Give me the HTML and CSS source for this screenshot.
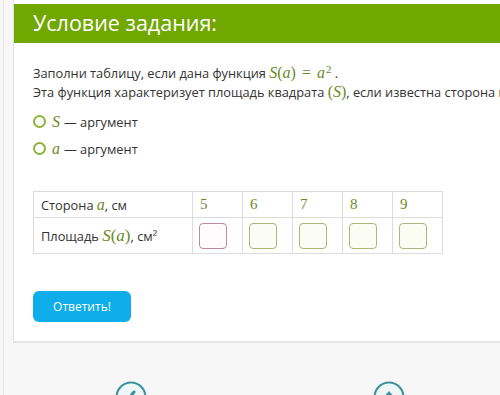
FILE: index.html
```html
<!DOCTYPE html>
<html lang="ru">
<head>
    <meta charset="UTF-8">
    <title>Условие задания</title>
    <link rel="stylesheet" href="styles.css">
</head>
<body>
    <div class="page">
        <div class="card">
            <header class="task-header">Условие задания:</header>

            <main class="task-body">
                <p class="task-text">Заполни таблицу, если дана функция <span class="math">S</span><span class="math-up">(</span><span class="math">a</span><span class="math-up">)</span><span class="math-up eq">=</span><span class="math">a</span><sup class="math-up">2</sup> .</p>
                <p class="task-text">Эта функция характеризует площадь квадрата <span class="math-up">(</span><span class="math">S</span><span class="math-up">)</span>, если известна сторона квадрата <span class="math-up">(</span><span class="math">a</span><span class="math-up">)</span>.</p>

                <div class="options">
                    <label class="option"><span class="radio"></span><span class="math">S</span> — аргумент</label>
                    <label class="option"><span class="radio"></span><span class="math">a</span> — аргумент</label>
                </div>

                <table class="answer-table">
                    <tr class="row-head">
                        <td class="label-cell">Сторона <span class="math">a</span>, см</td>
                        <td class="num">5</td>
                        <td class="num">6</td>
                        <td class="num">7</td>
                        <td class="num">8</td>
                        <td class="num">9</td>
                    </tr>
                    <tr class="row-input">
                        <td class="label-cell">Площадь <span class="math big">S</span><span class="math-up big">(</span><span class="math big">a</span><span class="math-up big">)</span>, см²</td>
                        <td><span class="box active"></span></td>
                        <td><span class="box"></span></td>
                        <td><span class="box"></span></td>
                        <td><span class="box"></span></td>
                        <td><span class="box"></span></td>
                    </tr>
                </table>

                <button class="answer-btn">Ответить!</button>
            </main>
        </div>

        <footer class="nav">
            <span class="nav-icon">
                <svg width="32" height="32" viewBox="0 0 32 32"><circle cx="16" cy="16" r="14.5" fill="#eef7f8" stroke="#3f8f9c" stroke-width="2"/><path d="M11 21 L19 11" stroke="#3f8f9c" stroke-width="3" stroke-linecap="round"/></svg>
            </span>
            <span class="nav-icon">
                <svg width="32" height="32" viewBox="0 0 32 32"><circle cx="16" cy="16" r="14.5" fill="#eef7f8" stroke="#3f8f9c" stroke-width="2"/><path d="M10 17 L16 10 L22 17 Z" fill="#3f8f9c"/></svg>
            </span>
        </footer>
    </div>
</body>
</html>
```

FILE: styles.css
```css
* {
    margin: 0;
    padding: 0;
    box-sizing: border-box;
}

body {
    font-family: 'Open Sans', 'Liberation Sans', sans-serif;
    background-color: #f7f7f7;
    color: #333;
    overflow: hidden;
    height: 395px;
}

/* --- page frame --- */
.page {
    margin-left: 3px;
    border-left: 1px solid #e6e6e6;
    padding-left: 9px;
    height: 395px;
    overflow: hidden;
}

.card {
    background-color: #fff;
    border-left: 1px solid #e0e0e0;
    border-bottom: 2px solid #e6e6e6;
    padding-top: 4px;
    height: 343px;
    overflow: hidden;
}

.task-header {
    background-color: #70a700;
    color: #fff;
    font-size: 21.5px;
    height: 39px;
    line-height: 38px;
    padding-left: 19px;
}

/* --- task --- */
.task-body {
    padding: 21px 19px 0;
}

.task-text {
    font-size: 12.8px;
    line-height: 19px;
    height: 19px;
    white-space: nowrap;
}

.math {
    font-family: 'Liberation Serif', 'DejaVu Serif', serif;
    font-style: italic;
    font-size: 16px;
    line-height: 1;
    color: #6b8a1f;
}
.math-up {
    font-family: 'Liberation Serif', 'DejaVu Serif', serif;
    font-size: 16px;
    line-height: 1;
    color: #6b8a1f;
}
.math-up.eq {
    margin: 0 6px;
}
.math.big, .math-up.big {
    font-size: 17px;
}
sup.math-up {
    font-size: 11px;
    line-height: 0;
    margin-left: 1px;
}

.options {
    margin-top: 10px;
    display: flex;
    flex-direction: column;
    gap: 8px;
}
.option {
    display: flex;
    align-items: center;
    gap: 4px;
    font-size: 12.8px;
    height: 19px;
}
.radio {
    width: 13px;
    height: 13px;
    border: 2px solid #8bb23a;
    border-radius: 50%;
    margin-right: 2px;
}

/* --- table --- */
.answer-table {
    margin-top: 33px;
    border-collapse: collapse;
    font-size: 12.8px;
}
.answer-table td {
    border: 1px solid #dcdcdc;
    padding: 0 7px;
    width: 50px;
}
.answer-table .label-cell {
    width: 159px;
}
.row-head td {
    height: 26px;
}
.row-input td {
    height: 36px;
}
.num {
    font-family: 'Liberation Serif', 'DejaVu Serif', serif;
    font-size: 15px;
    color: #6b8a1f;
}
.box {
    display: block;
    width: 28px;
    height: 26px;
    margin-left: -1px;
    border: 1px solid #aab67c;
    border-radius: 4px;
    background-color: #fbfcf4;
}
.box.active {
    border-color: #b98aa4;
    background-color: #fdfbfc;
}

.answer-btn {
    display: block;
    margin-top: 37px;
    width: 98px;
    height: 31px;
    background-color: #0faeeb;
    color: #fff;
    border: none;
    border-radius: 6px;
    font-family: inherit;
    font-size: 12px;
}

/* --- bottom nav --- */
.nav {
    display: flex;
    padding-top: 38px;
    padding-left: 102px;
    gap: 226px;
}
.nav-icon {
    width: 32px;
    height: 32px;
}
```
